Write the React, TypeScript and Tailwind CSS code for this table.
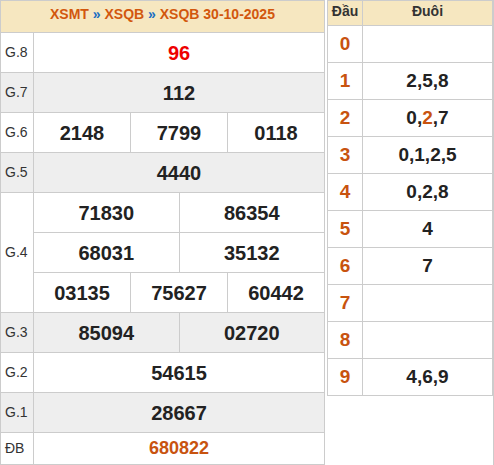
const font = { fontFamily: '"Liberation Sans", Arial, sans-serif' };

type Row = { label: string; nums: string[]; gray?: boolean; cls?: string };

const rows: Row[] = [
  { label: "G.8", nums: ["96"], cls: "text-[#ee0000]" },
  { label: "G.7", nums: ["112"], gray: true },
  { label: "G.6", nums: ["2148", "7799", "0118"] },
  { label: "G.5", nums: ["4440"], gray: true },
];

// hi = index of the tail digit shown in orange
const loto = [
  { d: "0", t: [] as string[], hi: -1 },
  { d: "1", t: ["2", "5", "8"], hi: -1 },
  { d: "2", t: ["0", "2", "7"], hi: 1 },
  { d: "3", t: ["0", "1", "2", "5"], hi: -1 },
  { d: "4", t: ["0", "2", "8"], hi: -1 },
  { d: "5", t: ["4"], hi: -1 },
  { d: "6", t: ["7"], hi: -1 },
  { d: "7", t: [], hi: -1 },
  { d: "8", t: [], hi: -1 },
  { d: "9", t: ["4", "6", "9"], hi: -1 },
];

const td = "border border-[#cccccc] text-center font-bold text-[20px] text-[#222222] p-0";
const lbl = "border border-[#cccccc] text-left pl-1 text-[14px] text-[#333333] font-normal w-[33px]";

export default function App() {
  return (
    <div className="flex w-[494px] h-[465px] bg-white overflow-hidden" style={font}>
      <table className="w-[326px] border-collapse table-fixed self-start">
        <colgroup>
          <col className="w-[33px]" />
          {Array.from({ length: 6 }).map((_, i) => (
            <col key={i} />
          ))}
        </colgroup>
        <tbody>
          <tr className="h-[32px] bg-[#f6e7c0]">
            <td colSpan={7} className="border border-[#cccccc] text-center align-top pt-[3px] text-[14px] font-bold text-[#d2570e]">
              XSMT <span className="text-[#1a6ec2]">»</span> XSQB <span className="text-[#1a6ec2]">»</span> XSQB 30-10-2025
            </td>
          </tr>
          {rows.map((r) => (
            <tr key={r.label} className={`h-[40px] ${r.gray ? "bg-[#eeeeee]" : ""}`}>
              <td className={lbl}>{r.label}</td>
              {r.nums.map((n) => (
                <td key={n} colSpan={6 / r.nums.length} className={`${td} ${r.cls ?? ""}`}>
                  {n}
                </td>
              ))}
            </tr>
          ))}
          <tr className="h-[40px]">
            <td rowSpan={3} className={lbl}>G.4</td>
            <td colSpan={3} className={td}>71830</td>
            <td colSpan={3} className={td}>86354</td>
          </tr>
          <tr className="h-[40px]">
            <td colSpan={3} className={td}>68031</td>
            <td colSpan={3} className={td}>35132</td>
          </tr>
          <tr className="h-[40px]">
            <td colSpan={2} className={td}>03135</td>
            <td colSpan={2} className={td}>75627</td>
            <td colSpan={2} className={td}>60442</td>
          </tr>
          <tr className="h-[40px] bg-[#eeeeee]">
            <td className={lbl}>G.3</td>
            <td colSpan={3} className={td}>85094</td>
            <td colSpan={3} className={td}>02720</td>
          </tr>
          <tr className="h-[40px]">
            <td className={lbl}>G.2</td>
            <td colSpan={6} className={td}>54615</td>
          </tr>
          <tr className="h-[40px] bg-[#eeeeee]">
            <td className={lbl}>G.1</td>
            <td colSpan={6} className={td}>28667</td>
          </tr>
          <tr className="h-[32px]">
            <td className={lbl}>ĐB</td>
            <td colSpan={6} className="border border-[#cccccc] text-center font-bold text-[18px] text-[#c8530f] p-0">
              680822
            </td>
          </tr>
        </tbody>
      </table>

      <div className="ml-[2px] flex-1 border-r border-[#cccccc] h-[465px]">
        <table className="w-[166px] border-collapse table-fixed">
          <colgroup>
            <col className="w-[35px]" />
            <col />
          </colgroup>
          <thead>
            <tr className="h-[25px] bg-[#f6e7c0]">
              <th className="border border-[#cccccc] align-top pt-0 text-[14px] font-bold text-[#333333]">Đầu</th>
              <th className="border border-[#cccccc] align-top pt-0 text-[14px] font-bold text-[#333333]">Đuôi</th>
            </tr>
          </thead>
          <tbody>
            {loto.map((r) => (
              <tr key={r.d} className="h-[37px]">
                <td className="border border-[#cccccc] text-center font-bold text-[19px] text-[#c8530f]">{r.d}</td>
                <td className="border border-[#cccccc] text-center font-bold text-[19px] text-[#222222]">
                  {r.t.map((x, i) => (
                    <span key={i}>
                      {i > 0 && ","}
                      <span className={i === r.hi ? "text-[#c8530f]" : ""}>{x}</span>
                    </span>
                  ))}
                </td>
              </tr>
            ))}
          </tbody>
        </table>
      </div>
    </div>
  );
}
